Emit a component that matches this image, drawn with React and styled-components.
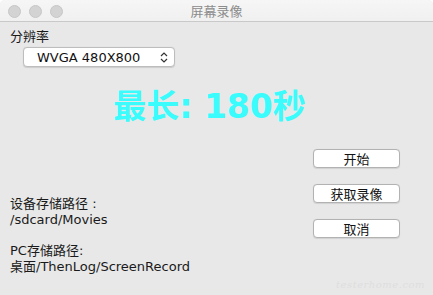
import styled, { createGlobalStyle } from "styled-components"

const Global = createGlobalStyle`
html, body {
  margin:0;
  padding:0;
  background:#ffffff;
}
`

const Window = styled.div`
position:relative;
width:433px;
height:295px;
display:flex;
flex-direction:column;
background:#e8e8e8;
border-radius:5px 5px 0 0;
overflow:hidden;
font-family:"DejaVu Sans","Noto Sans CJK SC",sans-serif;
font-size:13px;
color:#1a1a1a;
`

const TitleBar = styled.div`
position:relative;
height:21px;
flex-shrink:0;
display:flex;
align-items:center;
justify-content:center;
background:linear-gradient(#f6f6f6,#f0f0f0);
border-bottom:1px solid #c9c9c9;
`

const Lights = styled.div`
position:absolute;
left:8px;
top:5px;
display:flex;
gap:8px;
`

const Light = styled.span`
width:11px;
height:11px;
border-radius:50%;
background:#d3d3d3;
border:0.5px solid #c6c6c6;
`

const Title = styled.div`
font-family:"Noto Sans CJK SC",sans-serif;
font-size:13px;
color:#8c8c8c;
`

const Body = styled.div`
flex:1;
display:flex;
flex-direction:column;
padding:6px 10px 0 10px;
`

const Label = styled.div`
font-family:"Noto Sans CJK SC",sans-serif;
line-height:16px;
`

const Select = styled.div`
margin:3px 0 0 13px;
width:152px;
height:20px;
box-sizing:border-box;
display:flex;
align-items:center;
justify-content:space-between;
padding:0 6px 0 13px;
background:#ffffff;
border:1px solid #bdbdbd;
border-radius:4px;
box-shadow:0 0.5px 1px rgba(0,0,0,0.12);
font-size:13px;
color:#111;
`

const Big = styled.div`
margin-top:20px;
align-self:center;
padding-right:14px;
font-family:"DejaVu Sans","Noto Sans CJK SC",sans-serif;
font-weight:700;
font-size:33px;
line-height:40px;
color:#3afcfd;
`

const Bottom = styled.div`
margin-top:22px;
display:grid;
grid-template-columns:1fr 87px;
column-gap:10px;
padding-right:23px;
`

const Paths = styled.div`
padding-top:47px;
display:flex;
flex-direction:column;
gap:15px;
`

const PathBlock = styled.div`
line-height:16px;
`

const Buttons = styled.div`
display:flex;
flex-direction:column;
gap:16px;
`

const Button = styled.button`
height:19px;
box-sizing:border-box;
padding:0;
background:#ffffff;
border:1px solid #b2b2b2;
border-radius:4px;
box-shadow:0 0.5px 1px rgba(0,0,0,0.1);
font-family:"Noto Sans CJK SC",sans-serif;
font-size:13px;
color:#111;
line-height:17px;
`

const Mark = styled.div`
position:absolute;
right:8px;
bottom:5px;
font-family:"DejaVu Serif",cursive;
font-style:italic;
font-size:10px;
color:#dedede;
letter-spacing:0.5px;
`

const Chevrons = () => (
  <svg width="8" height="11" viewBox="0 0 8 11">
    <path d="M1 4 L4 1 L7 4 M1 7 L4 10 L7 7" fill="none" stroke="#333" strokeWidth="1.2" />
  </svg>
)

const App = () => {
  return (
    <>
      <Global />
      <Window>
        <TitleBar>
          <Lights>
            <Light />
            <Light />
            <Light />
          </Lights>
          <Title>屏幕录像</Title>
        </TitleBar>
        <Body>
          <Label>分辨率</Label>
          <Select>
            <span>WVGA 480X800</span>
            <Chevrons />
          </Select>
          <Big>最长: 180秒</Big>
          <Bottom>
            <Paths>
              <PathBlock>
                <div>设备存储路径 :</div>
                <div>/sdcard/Movies</div>
              </PathBlock>
              <PathBlock>
                <div>PC存储路径:</div>
                <div>桌面/ThenLog/ScreenRecord</div>
              </PathBlock>
            </Paths>
            <Buttons>
              <Button>开始</Button>
              <Button>获取录像</Button>
              <Button>取消</Button>
            </Buttons>
          </Bottom>
        </Body>
        <Mark>testerhome.com</Mark>
      </Window>
    </>
  )
}

export default App
